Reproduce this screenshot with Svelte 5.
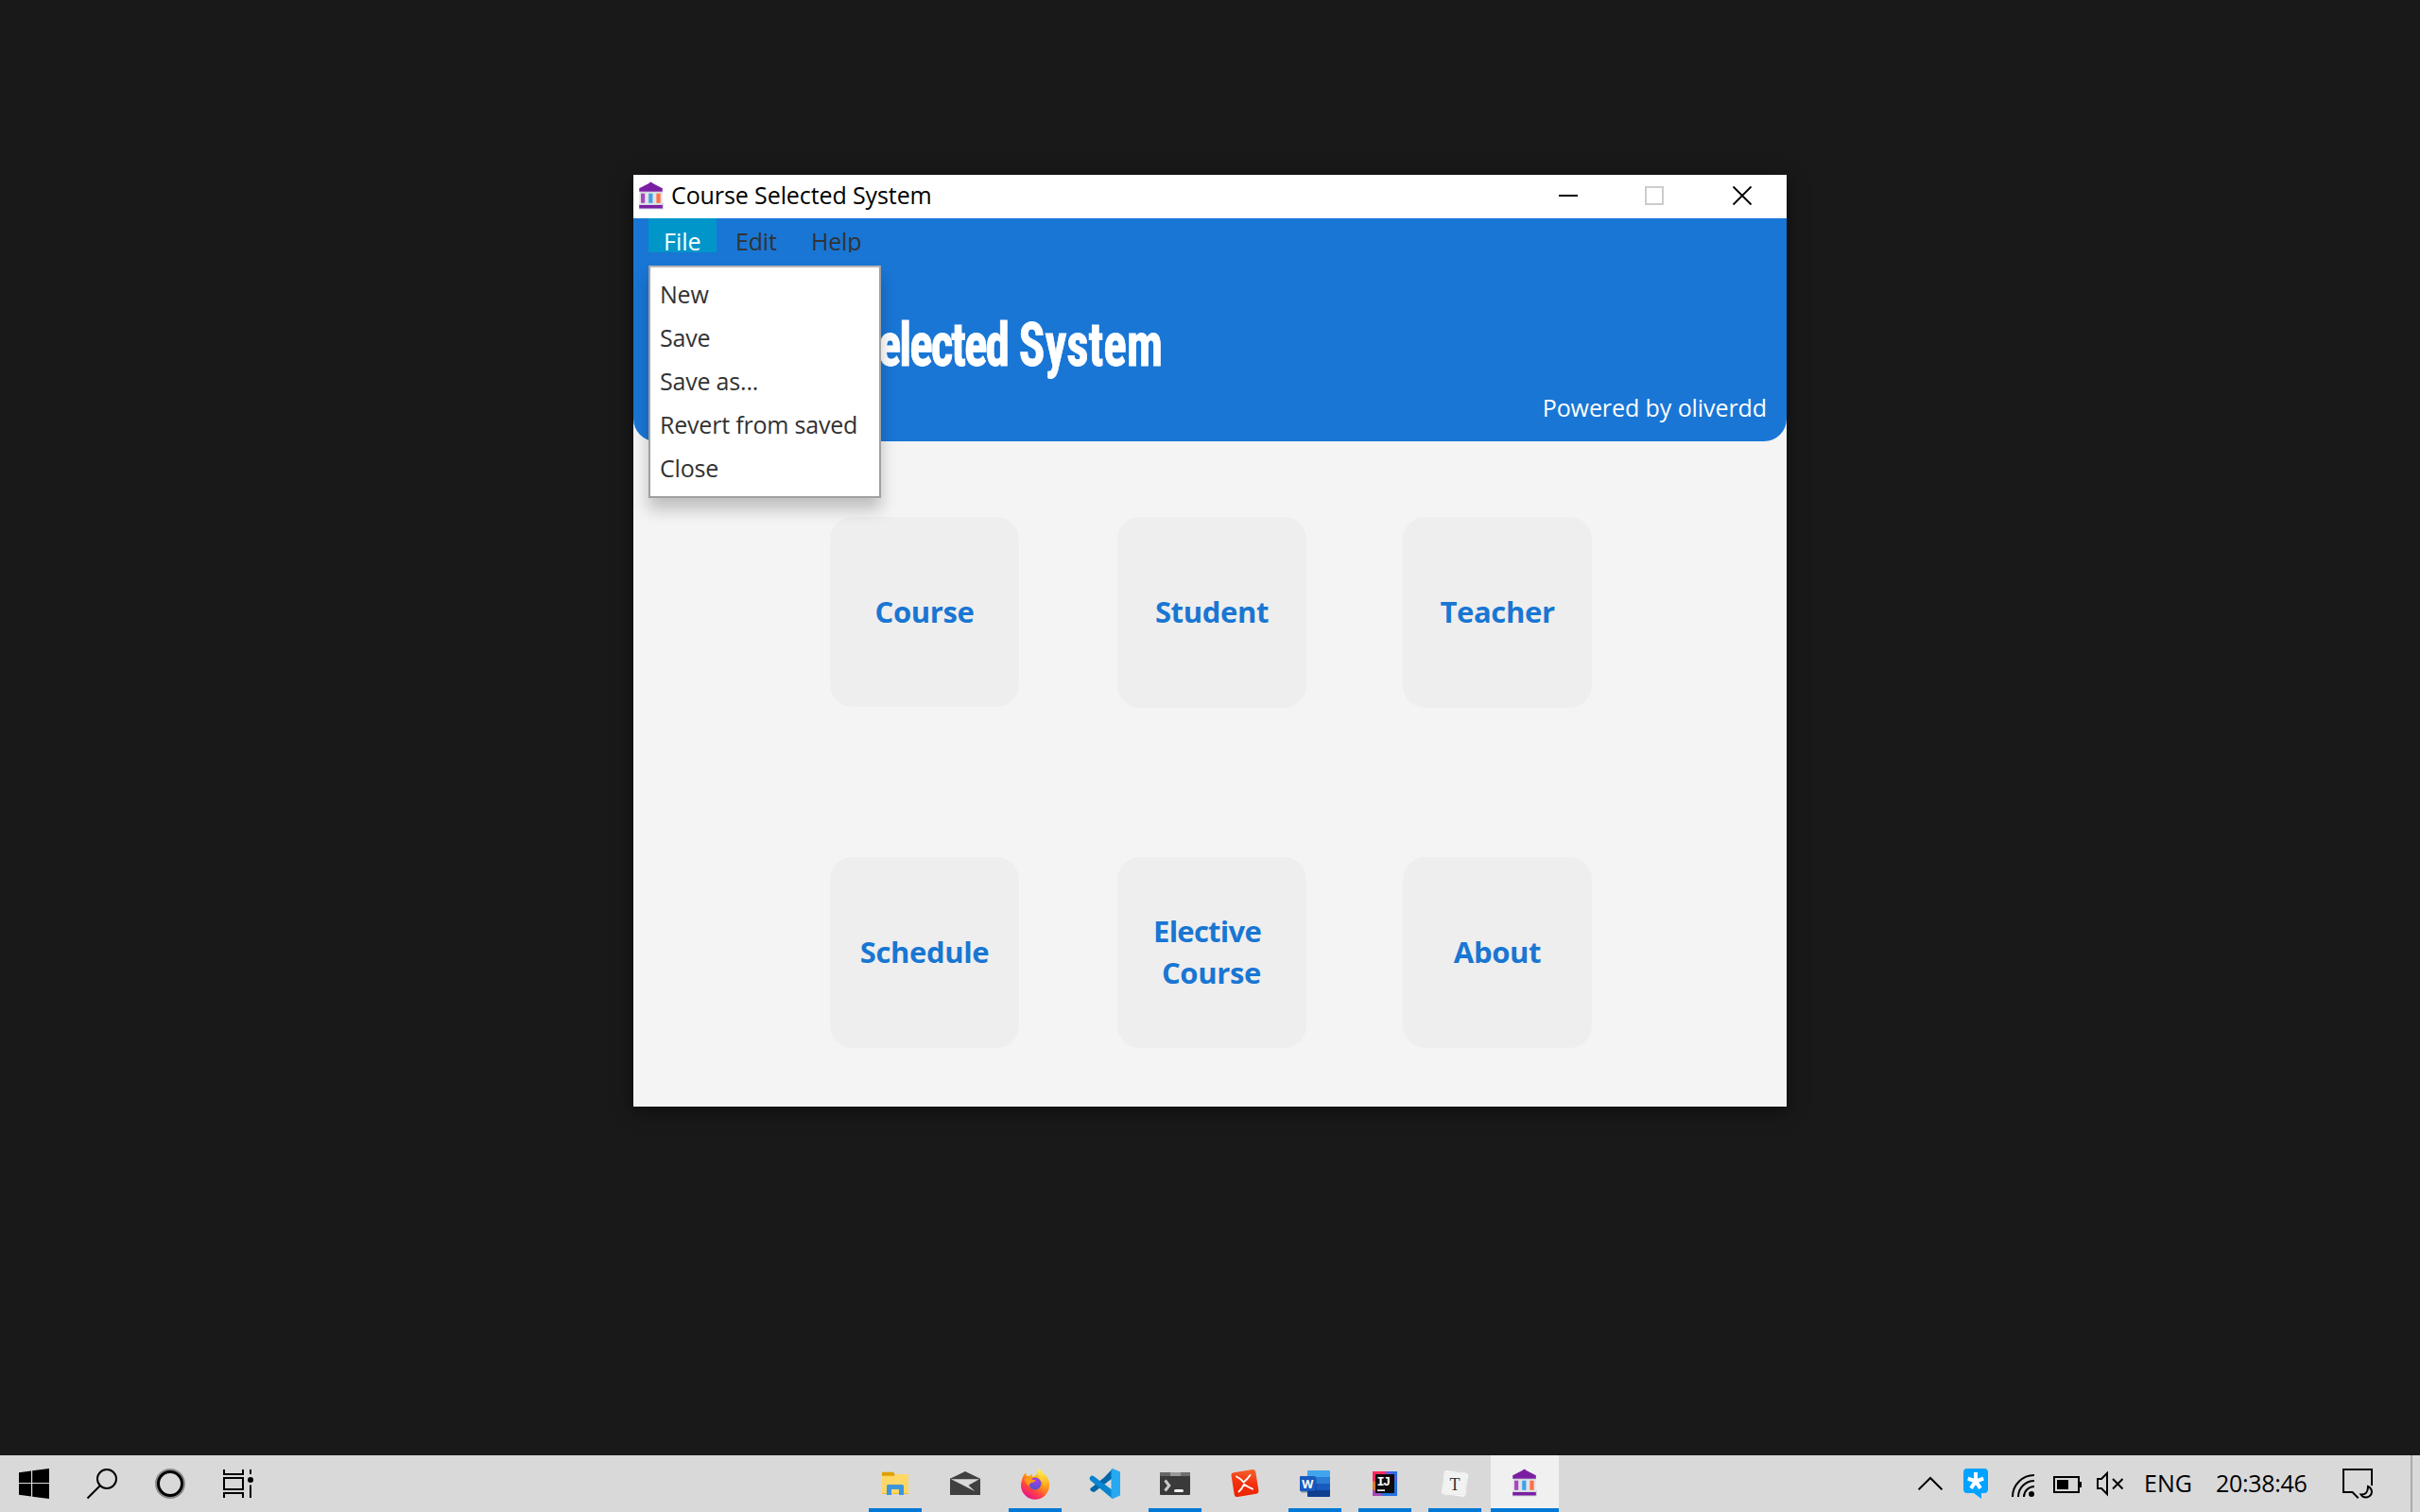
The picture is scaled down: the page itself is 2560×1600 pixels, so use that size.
<script>
  const fileMenu = ['New', 'Save', 'Save as...', 'Revert from saved', 'Close'];
  const cards = ['Course', 'Student', 'Teacher', 'Schedule', 'Elective Course', 'About'];
</script>

{#snippet bank(viewBox, cls)}
  <svg class={cls} {viewBox}>
    <path d="M23 37h26v6.4H23z M24 25h24v2H24z" fill="#cfd8dc" />
    <path d="M23.3 26h24.4v12H23.3z" fill="#dfe3e6" />
    <path d="M23.2 24.7v-3.5L33 16.2l2.5-1.8 2.5 1.8 9.8 5v3.5z M23.2 39h24.6v3.6H23.2z" fill="#7b1fa2" />
    <path d="M25 26.7h4.2v10.1H25z" fill="#ab47bc" />
    <path d="M33.2 26.7h4.2v10.1h-4.2z" fill="#42a0e6" />
    <path d="M41.4 26.7h4.2v10.1h-4.2z" fill="#ff7043" />
  </svg>
{/snippet}

<main class="desktop">
  <section class="window">
    <header class="titlebar">
      {@render bank('23 14 26 30', 'app-icon')}
      <span class="caption">Course Selected System</span>
      <div class="controls">
        <svg viewBox="0 0 92 46"><path d="M36 21h20v2H36z" fill="#000" /></svg>
        <svg viewBox="0 0 92 46"><rect x="36" y="13" width="18" height="18" fill="none" stroke="#ccc" stroke-width="2" /></svg>
        <svg viewBox="0 0 92 46"><path d="M36.500 12.500l19 19M55.500 12.500l-19 19" stroke="#000" stroke-width="1.800" /></svg>
      </div>
    </header>

    <div class="banner">
      <nav class="menubar">
        <span class="menu open">File</span>
        <span class="menu">Edit</span>
        <span class="menu">Help</span>
      </nav>
      <h1><span class="tight">Course Selected</span> System</h1>
      <p class="credit">Powered by oliverdd</p>
    </div>

    <div class="cards">
      {#each cards as card, i}
        <button class="card" class:first={i === 0}>
          {#if card.includes(' ')}
            <span class="pair"><span class="lead">{card.split(' ')[0]}</span><br />{card.split(' ')[1]}</span>
          {:else}
            {card}
          {/if}
        </button>
      {/each}
    </div>

    <ul class="popup">
      {#each fileMenu as item}
        <li>{item}</li>
      {/each}
    </ul>
  </section>

  <footer class="taskbar">
    <div class="group start">
      <svg class="slot" viewBox="0 0 72 60"><path d="M20 18.300L33 16.500V29H20zM34.200 16.300L52 14v15H34.200zM20 30h13v13.500L20 41.700zM34.200 30H52v16l-17.800-2.300z" /></svg>
      <svg class="slot" viewBox="0 0 72 60" fill="none" stroke="#000" stroke-width="2"><circle cx="41" cy="25" r="10" /><path d="M33.500 32.500L20.500 45.500" /></svg>
      <svg class="slot" viewBox="0 0 72 60" fill="none"><circle cx="36" cy="30" r="14.500" stroke="#8b8b8b" stroke-width="3" /><circle cx="36" cy="30" r="12.500" stroke="#000" stroke-width="3" /></svg>
      <svg class="slot" viewBox="0 0 72 60" fill="none" stroke="#000" stroke-width="2"><path d="M21 15v5h20v-5M21 24h20v12H21zM21 45v-5h20v5M49 15v5M49 31.500V45" /><circle cx="49" cy="26" r="3" fill="#000" stroke="none" /></svg>
    </div>

    <div class="group apps">
      <div class="app running">
        <svg class="slot" viewBox="0 0 72 60">
          <path d="M22 18.500q0-.800.800-.800h11l1.700 2v3H22z" fill="#dfa000" />
          <path d="M22 21.700h13l1.500-1.700h12.700q.800 0 .800.800V41H22z" fill="#ffd766" />
          <path d="M22 40h28v1H22z" fill="#f0b93a" />
          <path d="M27 42V32.500q0-1.500 1.500-1.500h15q1.500 0 1.500 1.500V42h-5v-6h-8v6z" fill="#3d95dc" />
        </svg>
      </div>
      <div class="app">
        <svg class="slot" viewBox="0 0 72 60">
          <path d="M20 24.700L36 17l16 7.700V42H20z" fill="#404040" />
          <path d="M21 25.200h30l-11.500 6.500 7 6.500z" fill="#d9d9d9" />
        </svg>
      </div>
      <div class="app running">
        <svg class="slot" viewBox="0 0 72 60">
          <defs>
            <linearGradient id="fox" x1=".8" y1=".1" x2=".25" y2=".95"><stop offset="0" stop-color="#ffe93a" /><stop offset=".4" stop-color="#ff980e" /><stop offset=".7" stop-color="#ff4048" /><stop offset="1" stop-color="#e31587" /></linearGradient>
            <linearGradient id="tail" x1=".4" y1="0" x2=".5" y2="1"><stop offset="0" stop-color="#fff44f" /><stop offset=".6" stop-color="#ffb524" /><stop offset="1" stop-color="#ff6a2a" /></linearGradient>
            <radialGradient id="globe" cx=".6" cy=".2" r=".8"><stop offset="0" stop-color="#a83ee0" /><stop offset=".6" stop-color="#7549dd" /><stop offset="1" stop-color="#4a57c8" /></radialGradient>
          </defs>
          <path d="M25.500 18.500l2 3.500 2.500-.300 3-2.200v3.500l4-2 3-5.500 2 4 3 1.500 1-1q5 5 5 11a15 15 0 1 1-29.500-3q.5-5 4-9.500z" fill="url(#fox)" />
          <path d="M39.800 14q4.500 2.500 5.200 7.500l1.500-1.500q5 6 4.400 12.500-.6 5.500-4.900 8.500 1.500-9-3.500-14-5-4.500-2.700-13z" fill="url(#tail)" />
          <circle cx="36" cy="30" r="6.500" fill="url(#globe)" />
          <path d="M25 24.500q5-1.500 8.500 1.200l3 .6q-.5 2.300-4.500 2.800-2 .8-2.200 3.500-4.500-3-4.800-8.100z" fill="#ff9817" />
        </svg>
      </div>
      <div class="app">
        <svg class="slot" viewBox="0 0 72 60">
          <path d="M22.500 24.500L44 42.500" stroke="#0078c8" stroke-width="5.500" stroke-linecap="round" />
          <path d="M44 14l-9 9.500L20.500 35q-1 2 2 3.500l2 .5L44 24z" fill="#0065a9" />
          <path d="M20.300 25.500q0-3 3.700-3.300L44 37v9L20.500 26.500z" fill="#0a84d0" />
          <path d="M44 14l8 3.500v25L44 46l-1.500-.800V14.800z" fill="#27a9f2" />
        </svg>
      </div>
      <div class="app running">
        <svg class="slot" viewBox="0 0 72 60">
          <rect x="20" y="18" width="32" height="24" rx="1" fill="#3a3a3a" />
          <path d="M20 22v-3q0-1 1-1h10v4z" fill="#666" /><path d="M31 18h11v4H31z" fill="#999" /><path d="M42 18h9q1 0 1 1v3H42z" fill="#6f6f6f" />
          <path d="M25.500 26.500l4.300 5.500-4.300 5.500" fill="none" stroke="#c9c9c9" stroke-width="3" />
          <path d="M36.500 37.500h7" stroke="#f2f2f2" stroke-width="3" stroke-linecap="round" />
        </svg>
      </div>
      <div class="app">
        <svg class="slot" viewBox="0 0 72 60">
          <defs><linearGradient id="mind" x1=".7" y1="0" x2=".4" y2="1"><stop offset="0" stop-color="#f5602a" /><stop offset=".5" stop-color="#f2330f" /><stop offset="1" stop-color="#ee2200" /></linearGradient></defs>
          <rect x="23" y="16.500" width="26" height="26" rx="3" fill="url(#mind)" transform="rotate(-9 36 29.500)" />
          <path d="M27 22.500q5 2.500 7.500 6 4-3 7-7.500M29.500 38.500q3.500-3 5.500-7.800 5 3.300 9 5" fill="none" stroke="#fff" stroke-width="1.900" stroke-linecap="round" stroke-linejoin="round" />
        </svg>
      </div>
      <div class="app running">
        <svg class="slot" viewBox="0 0 72 60">
          <path d="M28 23v-6q0-1 1-1h22q1 0 1 1v6z" fill="#41a5ee" /><path d="M28 23h24v7H28z" fill="#2b7cd3" /><path d="M28 30h24v7H28z" fill="#185abd" /><path d="M28 37h24v6q0 1-1 1H29q-1 0-1-1z" fill="#103f91" />
          <rect x="21" y="23" width="16.500" height="16.500" rx="1" fill="#0c2d69" opacity=".4" />
          <rect x="20" y="22" width="16.500" height="16" rx="1" fill="#185abd" />
          <text class="word" x="28.300" y="34.700" text-anchor="middle">W</text>
        </svg>
      </div>
      <div class="app running">
        <svg class="slot" viewBox="0 0 72 60">
          <path d="M23 17h26v26H23z" fill="#2372e0" />
          <path d="M23 17h15l4 8-12 10-7-4z" fill="#fb2a5c" />
          <path d="M23 27l6 2-2 9-4 5z" fill="#e27a2c" />
          <path d="M23 36l8 4 3 3H23z" fill="#a34bb4" />
          <path d="M36 17h6l7 6v4l-6 2z" fill="#5a5be6" />
          <path d="M26 20h20v20H26z" fill="#0b0b0b" /><path d="M28 36.300h8v1.600h-8z" fill="#fff" />
          <text class="idea" x="27.500" y="31.800">IJ</text>
        </svg>
      </div>
      <div class="app running">
        <svg class="slot" viewBox="0 0 72 60">
          <rect x="23.500" y="17.500" width="25" height="25" rx="2" fill="#fff" transform="rotate(8 36 30)" />
          <rect x="24" y="18" width="24" height="24" rx="1.500" fill="#f2f2f2" stroke="#e4e4e4" stroke-width=".6" />
          <text class="typora" x="36" y="36.500" text-anchor="middle">T</text>
        </svg>
      </div>
      <div class="app running active">{@render bank('0 0 72 60', 'slot')}</div>
    </div>

    <div class="group tray">
      <svg class="tile" viewBox="0 0 48 60" fill="none" stroke="#000" stroke-width="2"><path d="M11.600 36.300L24 24l12.400 12.300" /></svg>
      <svg class="tile" viewBox="0 0 48 60"><path d="M15 14h18q4 0 4 4v18q0 4-4 4h-3v6l-8-6h-7q-4 0-4-4V18q0-4 4-4z" fill="#00a3ff" /><path d="M24 27.500V18M24 27.500l-8.300-2.800M24 27.500l8.300-2.800M24 27.500l-5 7.300M24 27.500l5 7.300" stroke="#fff" stroke-width="4" /></svg>
      <svg class="tile" viewBox="0 0 48 60" fill="none" stroke="#000" stroke-width="2"><path d="M15 44A23 23 0 0 1 38 21M21 44A17 17 0 0 1 38 27M27 44A11 11 0 0 1 38 33" /><circle cx="35" cy="41" r="3" fill="#000" stroke="none" /></svg>
      <svg class="tile" viewBox="0 0 48 60"><path d="M11 23h26v16H11z" fill="none" stroke="#000" stroke-width="2" /><path d="M14 26h12v10H14zM38 28h2v6h-2z" /></svg>
      <svg class="tile" viewBox="0 0 48 60" fill="none" stroke="#000" stroke-width="2"><path d="M9 25h4l6-6v22l-6-6H9z" /><path d="M25 25l10.500 10.500M35.500 25L25 35.500" /></svg>
      <span class="lang">ENG</span>
      <span class="clock">20:38:46</span>
      <svg class="tile" viewBox="0 0 48 60" fill="none" stroke="#000" stroke-width="2"><path d="M39 32V15H9v24h9.500l6.200 6.200" /><path d="M35 33q3.600 1.500 4 5.500-.2 5-5.500 6-4 .3-6-3 7.500.5 7.500-8.500z" /></svg>
      <span class="peek"></span>
    </div>
  </footer>
</main>

<style>
  :global(body) { margin: 0; background: #191919; }
  svg { display: block; flex: none; }
  .desktop {
    display: flex; flex-direction: column; align-items: center; justify-content: space-between;
    box-sizing: border-box; width: 2560px; height: 1600px; padding-top: 185px;
    background: #191919; overflow: hidden;
    font: 25px 'Open Sans', 'Noto Sans', sans-serif;
  }
  .window { position: relative; width: 1220px; height: 986px; background: #f4f4f4; box-shadow: 0 4px 18px rgba(0, 0, 0, .5); }
  .titlebar { display: flex; height: 46px; background: #fff; color: #000; }
  .app-icon { width: 26px; height: 30px; margin: 7px 0 0 6px; }
  .caption { margin-left: 8px; line-height: 42px; letter-spacing: -.1px; }
  .controls { display: flex; margin-left: auto; padding-right: 1px; }
  .controls svg { width: 92px; height: 46px; }

  .banner { display: flex; flex-direction: column; height: 236px; border-radius: 0 0 24px 24px; background: #1976d5; color: #fff; }
  .menubar { display: flex; height: 36px; padding-left: 16px; overflow: hidden; color: #323232; line-height: 48px; }
  .menu { box-sizing: border-box; width: 80px; padding-left: 20px; letter-spacing: -.2px; }
  .menu.open { width: 72px; padding-left: 16px; background: #0096c9; color: #fff; letter-spacing: 0; }
  h1 {
    width: 760px; margin: 60px 0 0 -200px; text-align: right; white-space: nowrap;
    font: 700 65px/76px 'Roboto Condensed', 'Roboto', sans-serif;
    transform: scaleX(.79); transform-origin: right;
    -webkit-text-stroke: .8px #fff;
  }
  .tight { letter-spacing: -2.6px; }
  .credit { margin: auto 21px 19px auto; line-height: 34px; letter-spacing: -.08px; }

  .cards { display: grid; grid-template-columns: 304px 302px 200px; grid-template-rows: 360px 202px; padding: 80px 0 0 208px; }
  .card {
    width: 200px; height: 202px; padding: 0 0 3px; border: 0; border-radius: 24px; background: #eee;
    color: #1976d2; font: 700 31px/44px 'Open Sans', 'Noto Sans', sans-serif; letter-spacing: -.35px;
  }
  .card.first { height: 201px; padding-bottom: 2px; }
  .pair { display: block; padding-right: 8px; text-align: right; margin-right: 40px; }
  .lead { letter-spacing: -.75px; }

  .popup {
    position: absolute; left: 16px; top: 96px; box-sizing: border-box; width: 246px; margin: 0; padding: 5px 0 7px 10px;
    list-style: none; background: #fff; border: 2px solid #a0a0a0; border-top-color: #b5b5b5;
    color: #323232; line-height: 46px; letter-spacing: -.2px;
    box-shadow: 0 12px 16px rgba(0, 0, 0, .22);
  }

  .taskbar { display: flex; width: 2560px; height: 60px; background: #d9d9d9; color: #000; }
  .group { display: flex; }
  .slot { width: 72px; height: 60px; }
  .apps { gap: 2px; margin-left: 623px; }
  .app { width: 72px; height: 60px; }
  .running::after { content: ''; display: block; height: 4px; margin: -4px 8px 0; background: #0078d7; }
  .active { background: #f0f0f0; }
  .active::after { margin: -4px 0 0; }
  .word { font: 700 12.500px 'Open Sans', sans-serif; fill: #fff; }
  .idea { font: 700 13.500px 'Liberation Mono', monospace; fill: #fff; letter-spacing: -1.500px; }
  .typora { font: 18px 'Liberation Serif', serif; fill: #333; }
  .tray { flex: 1; margin-left: 369px; line-height: 58px; }
  .tile { width: 48px; height: 60px; }
  .lang { width: 77px; padding-left: 10px; box-sizing: border-box; }
  .clock { width: 135px; padding-left: 9px; box-sizing: border-box; letter-spacing: -.3px; }
  .peek { width: 2px; margin-left: 32px; background: #ababab; }
</style>
